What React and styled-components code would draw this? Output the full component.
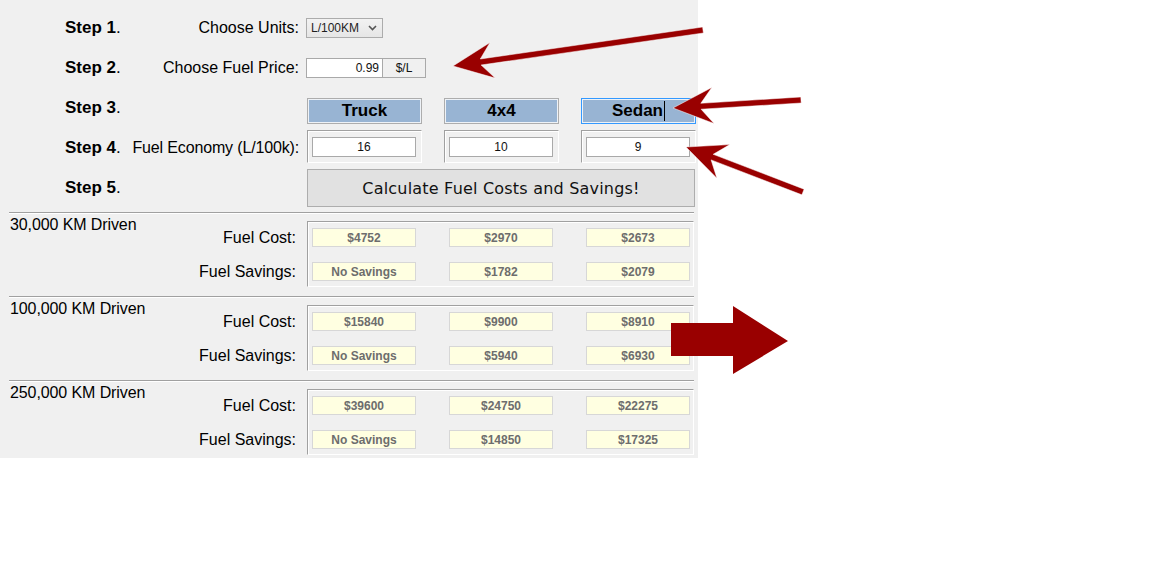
import React from 'react'
import styled, { createGlobalStyle, css } from 'styled-components'

const GlobalStyle = createGlobalStyle`
  body {
    margin: 0;
    background: #fff;
    font-family: 'Liberation Sans', Arial, sans-serif;
    color: #000;
  }
`

const vehicles = [
  { name: 'Truck', economy: '16' },
  { name: '4x4', economy: '10' },
  { name: 'Sedan', economy: '9', focused: true }
]

const results = [
  { km: '30,000', cost: ['$4752', '$2970', '$2673'], savings: ['No Savings', '$1782', '$2079'] },
  { km: '100,000', cost: ['$15840', '$9900', '$8910'], savings: ['No Savings', '$5940', '$6930'] },
  { km: '250,000', cost: ['$39600', '$24750', '$22275'], savings: ['No Savings', '$14850', '$17325'] }
]

const Page = styled.div`
  position: relative;
  width: 1157px;
  height: 568px;
  overflow: hidden;
`

const Panel = styled.div`
  width: 698px;
  height: 458px;
  box-sizing: border-box;
  padding-top: 8px;
  background: #f0f0f0;
  overflow: hidden;
`

const Steps = styled.div`
  display: grid;
  grid-template-columns: 69px 173px 388px;
  grid-auto-rows: 40px;
  align-items: center;
  padding-left: 65px;
`

const StepLabel = styled.div`
  font-size: 17px;
  white-space: nowrap;
  b {
    font-weight: bold;
  }
`

const Desc = styled.div`
  display: flex;
  justify-content: flex-end;
  font-size: 16px;
  padding-right: 8px;
  white-space: nowrap;
  letter-spacing: ${p => (p.$tight ? '-0.15px' : 'normal')};
`

const Controls = styled.div`
  display: grid;
  grid-template-columns: repeat(3, 115px);
  column-gap: 22px;
  margin-top: ${p => p.$shift || 0}px;
`

const Select = styled.div`
  width: 77px;
  height: 20px;
  box-sizing: border-box;
  display: flex;
  align-items: center;
  justify-content: space-between;
  padding: 0 5px 0 4px;
  border: 1px solid #acacac;
  background: linear-gradient(#f2f2f2, #e6e6e6);
  font-size: 12px;
  color: #1e1e1e;
  margin-left: -1px;
`

const PriceGroup = styled.div`
  display: flex;
  margin-left: -1px;
`

const TextBox = styled.div`
  width: ${p => p.$w}px;
  height: 20px;
  box-sizing: border-box;
  display: flex;
  align-items: center;
  justify-content: ${p => (p.$align === 'right' ? 'flex-end' : 'center')};
  padding: 0 3px;
  border: 1px solid #a9a9a9;
  background: ${p => (p.$unit ? '#f0f0f0' : '#fff')};
  font-size: 12px;
  color: #111;
  & + & {
    border-left: none;
  }
`

const VehicleButton = styled.div`
  height: 26px;
  box-sizing: border-box;
  display: flex;
  align-items: center;
  justify-content: center;
  border: 1px solid #adadad;
  box-shadow: inset 0 0 0 1px #eef2f7;
  background: #98b4d3;
  font-size: 17px;
  font-weight: bold;
  ${p =>
    p.$focused &&
    css`
      border-color: #3399ff;
    `}
`

const Caret = styled.span`
  display: inline-block;
  width: 1px;
  height: 20px;
  margin-left: 1px;
  background: #000;
`

const EtchedBox = styled.div`
  box-sizing: border-box;
  border: 1px solid;
  border-color: #a0a0a0 #fff #fff #a0a0a0;
  box-shadow: inset 1px 1px #fff;
`

const EconomyBox = styled(EtchedBox)`
  height: 33px;
  display: flex;
  align-items: center;
  padding: 0 4px;
`

const CalcButton = styled.div`
  grid-column: 3;
  width: 388px;
  height: 38px;
  box-sizing: border-box;
  display: flex;
  align-items: center;
  justify-content: center;
  border: 1px solid #adadad;
  background: #e1e1e1;
  font-family: 'DejaVu Sans', Verdana, sans-serif;
  font-size: 16px;
  letter-spacing: 0.2px;
  color: #111;
`

const Results = styled.div`
  margin-top: 4px;
`

const Section = styled.div`
  margin-left: 9px;
  width: 685px;
  display: grid;
  grid-template-columns: 1fr 387px;
  padding: 3px 0 9px;
  border-top: 1px solid #a0a0a0;
  box-shadow: inset 0 1px #fff;
`

const SectionLeft = styled.div`
  display: flex;
  flex-direction: column;
`

const Title = styled.div`
  font-size: 16px;
  line-height: 18px;
  padding-left: 1px;
  letter-spacing: -0.1px;
`

const Labels = styled.div`
  display: flex;
  flex-direction: column;
  align-items: flex-end;
  gap: 15px;
  padding-right: 11px;
  margin-top: -6px;
`

const RowLabel = styled.div`
  font-size: 16px;
  line-height: 19px;
  height: 19px;
  white-space: nowrap;
`

const ResultBox = styled(EtchedBox)`
  margin-top: 5px;
  height: 66px;
  padding: 6px 4px 5px;
  display: grid;
  grid-template-columns: repeat(3, 104px);
  column-gap: 33px;
  row-gap: 15px;
`

const ResultField = styled.div`
  height: 19px;
  box-sizing: border-box;
  display: flex;
  align-items: center;
  justify-content: center;
  border: 1px solid #d7d7d7;
  background: #ffffe1;
  font-size: 12px;
  font-weight: bold;
  color: #6d6d6d;
`

const Overlay = styled.svg`
  position: absolute;
  top: 0;
  left: 0;
  pointer-events: none;
`

// stealth-style arrow from start (x1,y1) to tip (x2,y2)
function arrowPoints([x1, y1], [x2, y2]) {
  const dx = x1 - x2
  const dy = y1 - y2
  const len = Math.hypot(dx, dy)
  const ux = dx / len
  const uy = dy / len
  const nx = -uy
  const ny = ux
  const shaft = 3
  const head = 40
  const half = 18
  const notch = 28
  const p = (a, b) => `${(x2 + ux * a + nx * b).toFixed(1)},${(y2 + uy * a + ny * b).toFixed(1)}`
  return [
    p(0, 0),
    p(head, half),
    p(notch, shaft),
    `${(x1 + nx * shaft).toFixed(1)},${(y1 + ny * shaft).toFixed(1)}`,
    `${(x1 - nx * shaft).toFixed(1)},${(y1 - ny * shaft).toFixed(1)}`,
    p(notch, -shaft),
    p(head, -half)
  ].join(' ')
}

const arrows = [
  [[703, 30], [453, 66]],
  [[801, 100], [673, 108]],
  [[803, 192], [686, 147]]
]

const Arrows = () => (
  <Overlay width="1157" height="568" viewBox="0 0 1157 568">
    {arrows.map(([s, t], i) => (
      <polygon
        key={i}
        points={arrowPoints(s, t)}
        fill="#990000"
        stroke="#fff"
        strokeOpacity="0.5"
        strokeWidth="1"
        strokeLinejoin="round"
      />
    ))}
    <polygon
      points="671,323 733,323 733,306 788,341 733,374 733,356 671,356"
      fill="#990000"
    />
  </Overlay>
)

export default function App() {
  return (
    <Page>
      <GlobalStyle />
      <Panel>
        <Steps>
          <StepLabel><b>Step 1</b>.</StepLabel>
          <Desc>Choose Units:</Desc>
          <div>
            <Select>
              <span>L/100KM</span>
              <svg width="9" height="6" viewBox="0 0 9 6">
                <path d="M1 1l3.5 3.5L8 1" fill="none" stroke="#555" strokeWidth="1.6" />
              </svg>
            </Select>
          </div>

          <StepLabel><b>Step 2</b>.</StepLabel>
          <Desc>Choose Fuel Price:</Desc>
          <PriceGroup>
            <TextBox $w={77} $align="right">0.99</TextBox>
            <TextBox $w={43} $unit>$/L</TextBox>
          </PriceGroup>

          <StepLabel><b>Step 3</b>.</StepLabel>
          <Desc />
          <Controls $shift={6}>
            {vehicles.map(v => (
              <VehicleButton key={v.name} $focused={v.focused}>
                {v.name}
                {v.focused && <Caret />}
              </VehicleButton>
            ))}
          </Controls>

          <StepLabel><b>Step 4</b>.</StepLabel>
          <Desc $tight>Fuel Economy (L/100k):</Desc>
          <Controls $shift={-3}>
            {vehicles.map(v => (
              <EconomyBox key={v.name}>
                <TextBox $w={104}>{v.economy}</TextBox>
              </EconomyBox>
            ))}
          </Controls>

          <StepLabel><b>Step 5</b>.</StepLabel>
          <CalcButton>Calculate Fuel Costs and Savings!</CalcButton>
        </Steps>

        <Results>
          {results.map(r => (
            <Section key={r.km}>
              <SectionLeft>
                <Title>{r.km} KM Driven</Title>
                <Labels>
                  <RowLabel>Fuel Cost:</RowLabel>
                  <RowLabel>Fuel Savings:</RowLabel>
                </Labels>
              </SectionLeft>
              <ResultBox>
                {[...r.cost, ...r.savings].map((val, i) => (
                  <ResultField key={i}>{val}</ResultField>
                ))}
              </ResultBox>
            </Section>
          ))}
        </Results>
      </Panel>
      <Arrows />
    </Page>
  )
}
